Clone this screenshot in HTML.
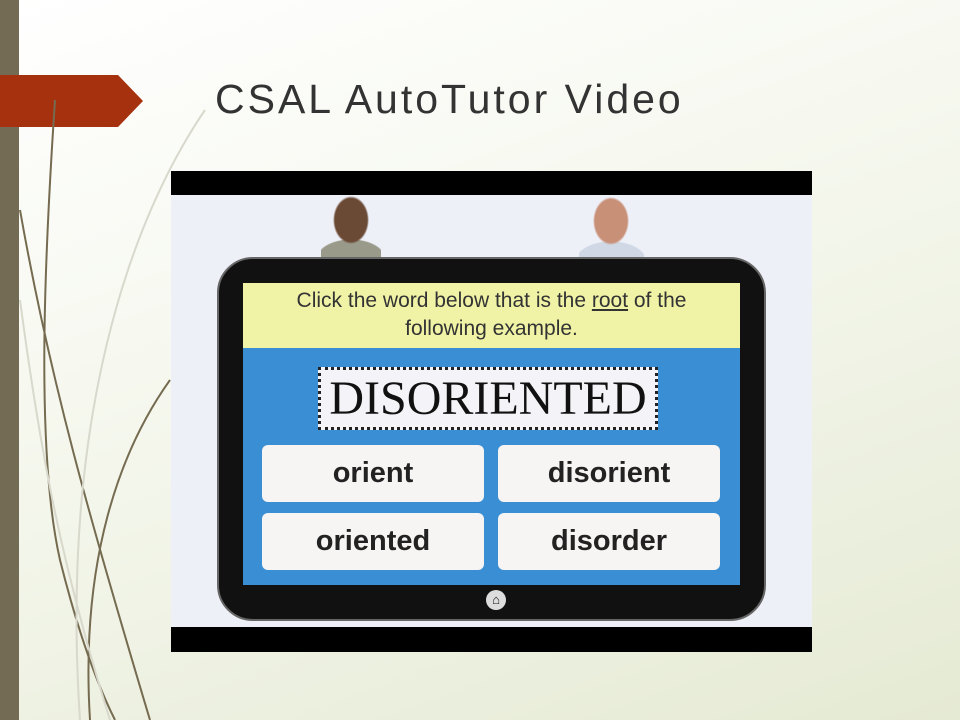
<!DOCTYPE html>
<html><head><style>
body{margin:0;width:960px;height:720px;overflow:hidden;position:relative;font-family:"Liberation Sans",sans-serif;
background:linear-gradient(160deg,#ffffff 0%,#f6f8ef 40%,#e5ead4 100%);}
.abs{position:absolute}
.btn{position:absolute;background:#f7f4f4;border-radius:6px;width:222px;height:57px;display:flex;align-items:center;justify-content:center;font-weight:bold;font-size:29px;color:#222}
</style></head><body>
<div class="abs" style="left:0;top:0;width:19px;height:720px;background:#736b54"></div>
<svg class="abs" style="left:0;top:0" width="240" height="720">
<polygon points="0,75 118,75 143,101 118,127 0,127" fill="#a6310f"/>
<g fill="none" stroke="#756b50" stroke-width="2">
<path d="M55,100 C45,250 35,450 60,560 C80,640 100,690 115,720"/>
<path d="M20,210 C50,380 90,520 150,720"/>
<path d="M170,380 C120,450 80,560 90,720" />
</g>
<g fill="none" stroke="#d8d8cc" stroke-width="2">
<path d="M205,110 C130,220 60,420 80,720"/>
<path d="M20,300 C40,450 60,560 110,720"/>
</g>
</svg>
<div class="abs" style="left:215px;top:76px;font-size:41px;color:#333;letter-spacing:3px">CSAL AutoTutor Video</div>
<div class="abs" style="left:171px;top:171px;width:641px;height:481px;background:#000">
<div class="abs" style="left:0;top:24px;width:641px;height:432px;background:#eef0f8">
 <div class="abs" style="left:150px;top:0;width:60px;height:62px;background:radial-gradient(ellipse 18px 24px at 30px 25px,#6b4a35 90%,transparent 100%),radial-gradient(ellipse 35px 20px at 30px 64px,#9a9a8a 95%,transparent 100%)"></div>
 <div class="abs" style="left:408px;top:0;width:65px;height:62px;background:radial-gradient(ellipse 18px 24px at 32px 26px,#c99078 90%,transparent 100%),radial-gradient(ellipse 36px 20px at 32px 66px,#cfd8e4 95%,transparent 100%)"></div>
 <div class="abs" style="left:46px;top:62px;width:549px;height:364px;background:#111;border-radius:36px;border:2px solid #666;box-sizing:border-box"></div>
 <div class="abs" style="left:72px;top:88px;width:497px;height:65px;background:#f0f3a6;text-align:center;font-size:21px;line-height:28px;color:#333;padding-top:4px;box-sizing:border-box">Click the word below that is the <u>root</u> of the<br>following example.</div>
 <div class="abs" style="left:72px;top:153px;width:497px;height:237px;background:#3a8fd4"></div>
 <div class="abs" style="left:147px;top:172px;width:340px;height:63px;background:#f4f4f8;border:3px dotted #222;box-sizing:border-box;text-align:center;font-family:'Liberation Serif',serif;font-size:48px;line-height:58px;color:#111">DISORIENTED</div>
 <div class="btn" style="left:91px;top:250px">orient</div>
 <div class="btn" style="left:327px;top:250px">disorient</div>
 <div class="btn" style="left:91px;top:318px">oriented</div>
 <div class="btn" style="left:327px;top:318px">disorder</div>
 <div class="abs" style="left:315px;top:395px;width:20px;height:20px;border-radius:50%;background:#ddd;color:#111;font-size:13px;text-align:center;line-height:20px">⌂</div>
</div></div>
</body></html>
